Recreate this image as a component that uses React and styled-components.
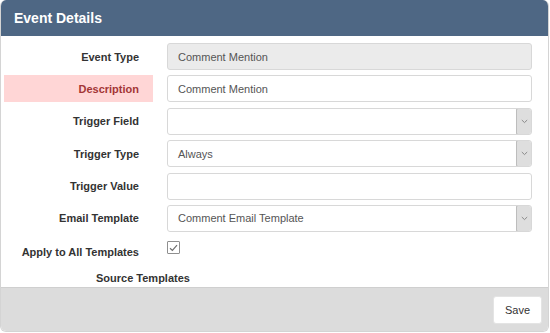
import React from 'react'
import styled, {createGlobalStyle} from 'styled-components'

const Global = createGlobalStyle`
  html, body { margin: 0; padding: 0; background: #fff; }
  body { font-family: "Liberation Sans", Arial, sans-serif; }
`

const Panel = styled.div`
  width: 549px;
  height: 332px;
  box-sizing: border-box;
  border: 1px solid #d4d4d4;
  border-top: none;
  border-radius: 6px;
  display: flex;
  flex-direction: column;
  overflow: hidden;
  background: #fff;
`

const Header = styled.div`
  height: 36px;
  background: #4e6784;
  color: #fff;
  font-size: 14px;
  font-weight: bold;
  display: flex;
  align-items: center;
  padding-left: 13px;
  flex-shrink: 0;
`

const Body = styled.div`
  flex: 1;
  padding: 7px 16px 0 3px;
  display: flex;
  flex-direction: column;
  gap: 5.4px;
`

const Row = styled.div`
  display: flex;
  align-items: ${p => (p.$top ? 'flex-start' : 'stretch')};
  gap: 14px;
  height: ${p => p.$h || 27}px;
  margin-top: ${p => p.$mt || 0}px;
`

const Label = styled.div`
  width: 149px;
  flex-shrink: 0;
  box-sizing: border-box;
  padding-right: 14px;
  padding-top: ${p => p.$pt || 0}px;
  display: flex;
  align-items: ${p => (p.$pt ? 'flex-start' : 'center')};
  justify-content: flex-end;
  font-size: 11px;
  font-weight: bold;
  color: ${p => (p.$error ? '#a33636' : '#333')};
  background: ${p => (p.$error ? '#ffd6d6' : 'transparent')};
`

const Field = styled.div`
  flex: 1;
  box-sizing: border-box;
  border: 1px solid #d8d8d8;
  border-radius: 3px;
  background: ${p => (p.$disabled ? '#ebebeb' : '#fff')};
  display: flex;
  align-items: center;
  padding-left: 10px;
  font-size: 11px;
  color: #555;
  overflow: hidden;
`

const FieldText = styled.span`
  flex: 1;
`

const Arrow = styled.span`
  width: 14px;
  align-self: stretch;
  margin: -1px;
  background: #dedede;
  border: 1px solid #bdbdbd;
  border-radius: 2px;
  display: flex;
  align-items: center;
  justify-content: center;
`

const Check = styled.span`
  width: 11px;
  height: 11px;
  margin-top: 2px;
  border: 1px solid #8f8f8f;
  border-radius: 1px;
  display: flex;
  align-items: center;
  justify-content: center;
  background: #fff;
`

const Section = styled.div`
  padding-left: 92px;
  padding-top: 5px;
  font-size: 11px;
  font-weight: bold;
  color: #333;
`

const Footer = styled.div`
  height: 43px;
  flex-shrink: 0;
  background: #dcdcdc;
  border-top: 1px solid #cfcfcf;
  display: flex;
  align-items: center;
  justify-content: flex-end;
  padding-right: 6px;
`

const Button = styled.button`
  width: 49px;
  height: 28px;
  border: 1px solid #e4e4e4;
  border-radius: 3px;
  background: #fff;
  font-family: "Liberation Sans", Arial, sans-serif;
  font-size: 11px;
  color: #333;
  cursor: pointer;
`

const Chevron = () => (
  <svg width="7" height="5" viewBox="0 0 7 5">
    <path d="M0.8 1 L3.5 3.6 L6.2 1" fill="none" stroke="#8a8a8a" strokeWidth="1" />
  </svg>
)

const Select = ({value}) => (
  <Field>
    <FieldText>{value}</FieldText>
    <Arrow><Chevron /></Arrow>
  </Field>
)

export default function App() {
  return (
    <>
      <Global />
      <Panel>
        <Header>Event Details</Header>
        <Body>
          <Row>
            <Label>Event Type</Label>
            <Field $disabled>Comment Mention</Field>
          </Row>
          <Row>
            <Label $error>Description</Label>
            <Field>Comment Mention</Field>
          </Row>
          <Row>
            <Label>Trigger Field</Label>
            <Select value="" />
          </Row>
          <Row>
            <Label>Trigger Type</Label>
            <Select value="Always" />
          </Row>
          <Row>
            <Label>Trigger Value</Label>
            <Field />
          </Row>
          <Row>
            <Label>Email Template</Label>
            <Select value="Comment Email Template" />
          </Row>
          <Row $top $h={22} $mt={2}>
            <Label $pt={7}>Apply to All Templates</Label>
            <Check>
              <svg width="9" height="8" viewBox="0 0 9 8">
                <path d="M1 4.2 L3.4 6.5 L8 1.2" fill="none" stroke="#6f6f6f" strokeWidth="1.2" />
              </svg>
            </Check>
          </Row>
          <Section>Source Templates</Section>
        </Body>
        <Footer>
          <Button>Save</Button>
        </Footer>
      </Panel>
    </>
  )
}
